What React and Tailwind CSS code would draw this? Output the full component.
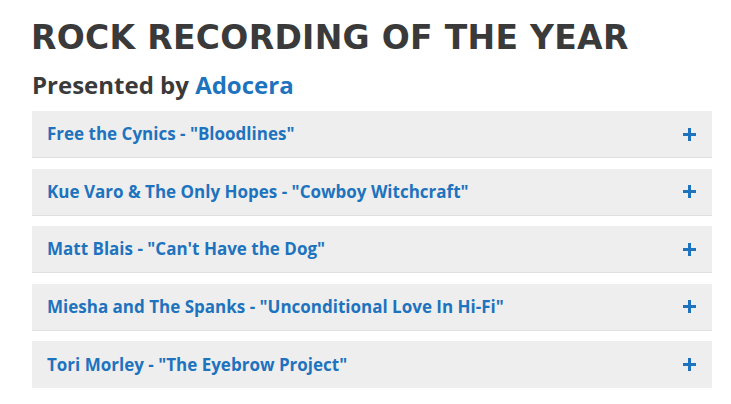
import React from "react";

const items = [
  'Free the Cynics - "Bloodlines"',
  'Kue Varo & The Only Hopes - "Cowboy Witchcraft"',
  'Matt Blais - "Can\'t Have the Dog"',
  'Miesha and The Spanks - "Unconditional Love In Hi-Fi"',
  'Tori Morley - "The Eyebrow Project"',
];

function Plus() {
  return (
    <svg width="13" height="13" viewBox="0 0 13 13" className="shrink-0">
      <rect x="5" y="0" width="3" height="13" fill="#1e73be" />
      <rect x="0" y="5" width="13" height="3" fill="#1e73be" />
    </svg>
  );
}

export default function App() {
  return (
    <div className="bg-white w-[731px] h-[404px] overflow-hidden pl-[32px] pr-[19px] pt-[18px]">
      <h1
        className="text-[33px] leading-[40px] font-bold text-[#3a3a3a] tracking-[0.3px] ml-[-1px]"
        style={{ fontFamily: '"DejaVu Sans", sans-serif' }}
      >
        ROCK RECORDING OF THE YEAR
      </h1>
      <h2
        className="mt-[12px] text-[24px] leading-[30px] font-bold text-[#3a3a3a]"
        style={{ fontFamily: '"Open Sans", sans-serif' }}
      >
        Presented by <span className="text-[#1e73be]">Adocera</span>
      </h2>
      <div className="mt-[11px] flex flex-col gap-[10.5px]">
        {items.map((t, i) => (
          <div
            key={i}
            className={
              "h-[47px] bg-[#eeeeee] flex items-center justify-between pl-[15px] pr-[16px] " +
              (i < items.length - 1 ? "border-b border-[#dfdfdf]" : "")
            }
          >
            <span
              className="text-[17px] font-bold text-[#1e73be]"
              style={{ fontFamily: '"Open Sans", sans-serif' }}
            >
              {t}
            </span>
            <Plus />
          </div>
        ))}
      </div>
    </div>
  );
}
